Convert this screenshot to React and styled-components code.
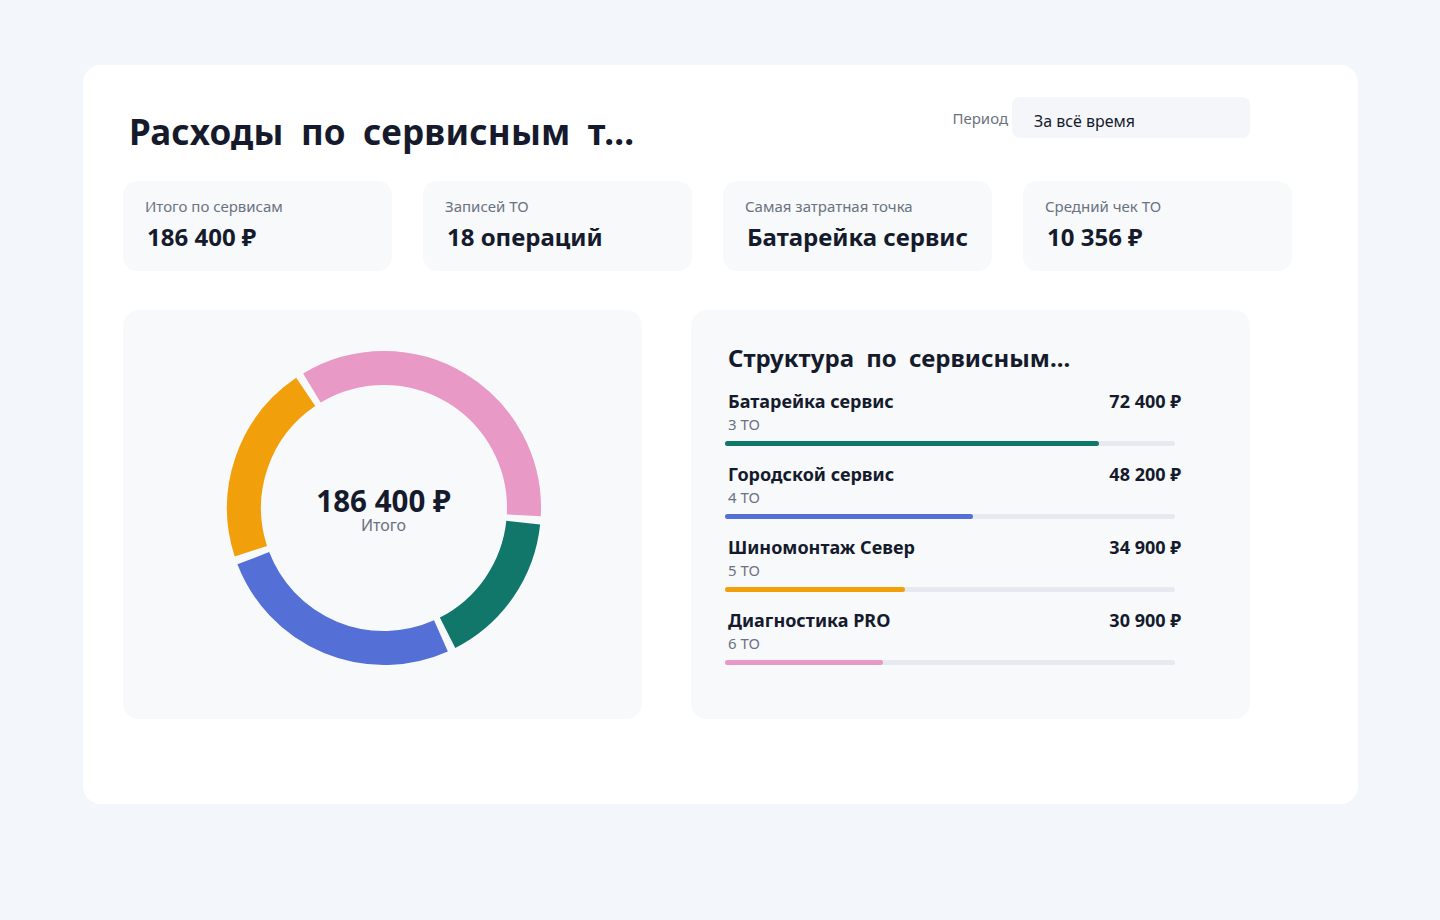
import React from "react";
import styled, { createGlobalStyle } from "styled-components";

const Global = createGlobalStyle`
  body { margin: 0; background: #f3f6fa; font-family: "Noto Sans", "Open Sans", sans-serif; color: #151b2c; }
`;
const Page = styled.div`padding: 65px 82px 116px 83px;`;
const Card = styled.div`
  background: #fff; border-radius: 18px; height: 739px; box-sizing: border-box;
  padding: 32px 66px 0 40px;
`;
const Header = styled.div`display: flex; justify-content: space-between; align-items: flex-start; padding-right: 42px; height: 55px;`;
const Title = styled.h1`
  margin: 11px 0 0 6px; font-size: 35px; line-height: 48px; font-weight: 700; word-spacing: 8px; letter-spacing: 0.2px;
`;
const PeriodWrap = styled.div`display: flex; align-items: flex-start; gap: 4px;`;
const PeriodLabel = styled.span`font-size: 15px; color: #6b7280; margin-top: 11px;`;
const Select = styled.div`
  width: 238px; height: 41px; background: #f4f6fa; border-radius: 8px; box-sizing: border-box;
  padding: 13px 22px; font-size: 16px; color: #151b2c;
`;
const Stats = styled.div`display: grid; grid-template-columns: repeat(4, 269px); gap: 31px; margin-top: 29px;`;
const Stat = styled.div`background: #f7f9fb; border-radius: 14px; height: 90px; padding: 15px 22px; box-sizing: border-box;`;
const StatLabel = styled.div`font-size: 15px; color: #6b7280;`;
const StatValue = styled.div`font-size: 24px; font-weight: 700; margin-top: 4px; margin-left: 2px;`;
const Lower = styled.div`display: flex; gap: 49px; margin-top: 39px;`;
const Panel = styled.div`
  background: #f7f9fb; border-radius: 16px; height: 409px; width: ${p => p.$w}px; box-sizing: border-box;
  padding: ${p => p.$pad || "0"};
  ${p => p.$center && "display:flex;align-items:center;justify-content:center;"}
`;
const DonutBox = styled.div`position: relative; width: 320px; height: 320px; margin: 0 0 13px 2px;`;
const Center = styled.div`
  position: absolute; inset: 0; display: flex; flex-direction: column; align-items: center; justify-content: center; padding-top: 4px;
`;
const CenterVal = styled.div`font-size: 29.5px; font-weight: 700; line-height: 1.05;`;
const CenterLbl = styled.div`font-size: 16px; color: #6b7280; line-height: 1.1;`;
const PanelTitle = styled.h2`margin: 0 0 14px; font-size: 24px; font-weight: 700; word-spacing: 6px;`;
const Row = styled.div`margin-bottom: 15px; width: 453px;`;
const RowTop = styled.div`display: flex; justify-content: space-between; font-size: 18px; font-weight: 700; line-height: 26px;`;
const Count = styled.div`font-size: 15px; color: #6b7280; line-height: 20px; margin-top: 0px;`;
const Track = styled.div`height: 5px; border-radius: 3px; background: #e6eaf0; margin: 7px 6px 0 -3px;`;
const Fill = styled.div`height: 100%; border-radius: 3px; background: ${p => p.$c};`;

const rows = [
  ["Батарейка сервис", "72 400 ₽", "3 ТО", "#11776b", 83],
  ["Городской сервис", "48 200 ₽", "4 ТО", "#5470d6", 55],
  ["Шиномонтаж Север", "34 900 ₽", "5 ТО", "#f29f0c", 40],
  ["Диагностика PRO", "30 900 ₽", "6 ТО", "#e899c6", 35],
];
const segs = [
  [329, 453, "#e899c6"],
  [456, 513, "#11776b"],
  [516, 609, "#5470d6"],
  [612, 686, "#f29f0c"],
];
function arc(a0, a1, r = 140, c = 160) {
  const p = a => [c + r * Math.sin(a * Math.PI / 180), c - r * Math.cos(a * Math.PI / 180)];
  const [x0, y0] = p(a0), [x1, y1] = p(a1);
  return `M${x0} ${y0} A${r} ${r} 0 ${a1 - a0 > 180 ? 1 : 0} 1 ${x1} ${y1}`;
}

export default function App() {
  return (
    <Page>
      <Global />
      <Card>
        <Header>
          <Title>Расходы по сервисным т...</Title>
          <PeriodWrap>
            <PeriodLabel>Период</PeriodLabel>
            <Select>За всё время</Select>
          </PeriodWrap>
        </Header>
        <Stats>
          <Stat><StatLabel>Итого по сервисам</StatLabel><StatValue>186 400 ₽</StatValue></Stat>
          <Stat><StatLabel>Записей ТО</StatLabel><StatValue>18 операций</StatValue></Stat>
          <Stat><StatLabel>Самая затратная точка</StatLabel><StatValue>Батарейка сервис</StatValue></Stat>
          <Stat><StatLabel>Средний чек ТО</StatLabel><StatValue>10 356 ₽</StatValue></Stat>
        </Stats>
        <Lower>
          <Panel $w={519} $center>
            <DonutBox>
              <svg width="320" height="320">
                {segs.map(([a, b, c], i) => (
                  <path key={i} d={arc(a, b)} stroke={c} strokeWidth="34" fill="none" />
                ))}
              </svg>
              <Center>
                <CenterVal>186 400 ₽</CenterVal>
                <CenterLbl>Итого</CenterLbl>
              </Center>
            </DonutBox>
          </Panel>
          <Panel $w={559} $pad="31px 0 0 37px">
            <PanelTitle>Структура по сервисным...</PanelTitle>
            {rows.map(([n, v, c, col, w]) => (
              <Row key={n}>
                <RowTop><span>{n}</span><span>{v}</span></RowTop>
                <Count>{c}</Count>
                <Track><Fill $c={col} style={{ width: `${w}%` }} /></Track>
              </Row>
            ))}
          </Panel>
        </Lower>
      </Card>
    </Page>
  );
}
